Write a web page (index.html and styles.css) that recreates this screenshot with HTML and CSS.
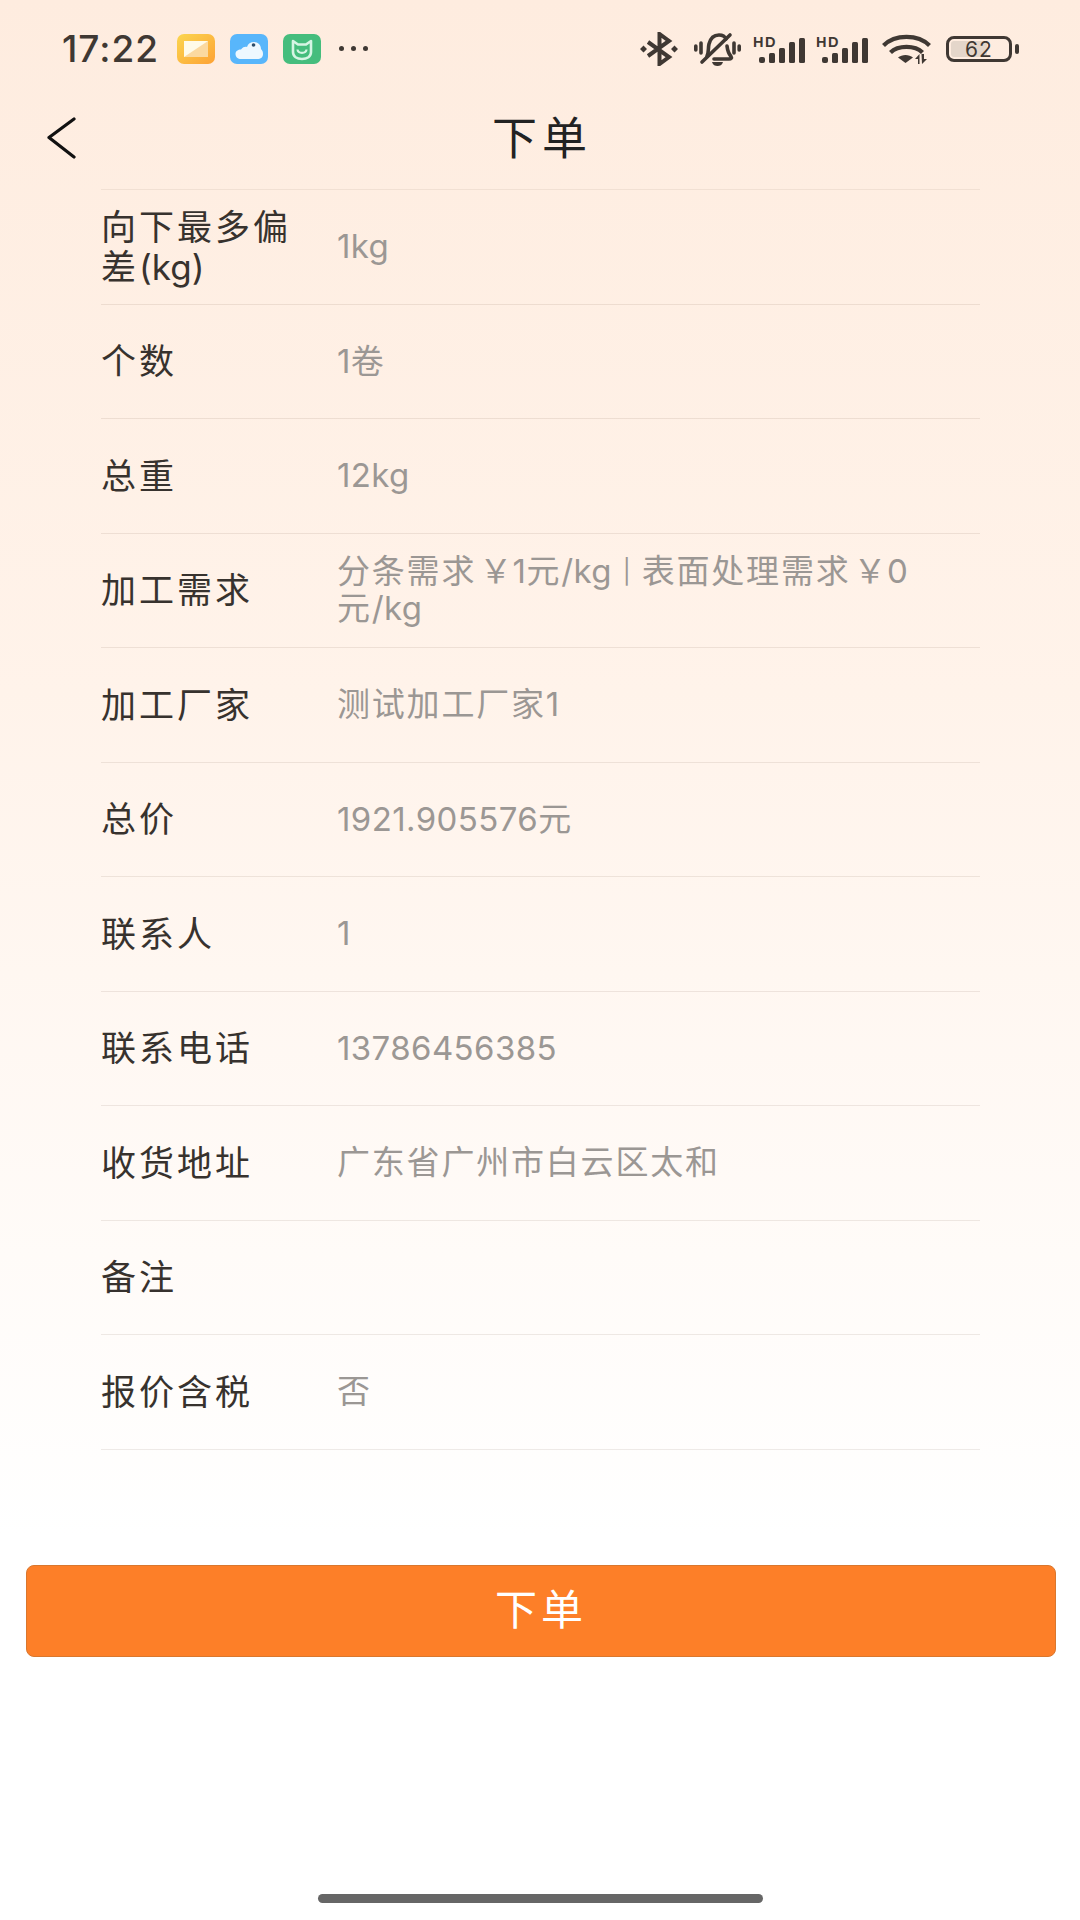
FILE: index.html
```html
<!DOCTYPE html>
<html lang="zh-CN">
<head>
    <meta charset="UTF-8">
    <meta name="viewport" content="width=device-width, initial-scale=1.0">
    <title>下单</title>
    <link rel="stylesheet" href="styles.css">
</head>
<body>
    <div class="page">
        <!-- Status Bar -->
        <div class="status-bar">
            <div class="status-left">
                <span class="time">17:22</span>
                <svg class="app-icon" viewBox="0 0 38 30">
                    <defs>
                        <linearGradient id="yellowBg" x1="0" y1="0" x2="1" y2="1">
                            <stop offset="0" stop-color="#fbd64f"/>
                            <stop offset="1" stop-color="#fda235"/>
                        </linearGradient>
                    </defs>
                    <rect width="38" height="30" rx="7" fill="url(#yellowBg)"/>
                    <path d="M7 7H31V23H7Z" fill="#fbd9a0"/>
                    <path d="M7 7H31L7 23Z" fill="#fffbe9"/>
                </svg>
                <svg class="app-icon" viewBox="0 0 38 30">
                    <rect width="38" height="30" rx="7" fill="#58b6fb"/>
                    <path d="M11 25C8 25 5.500 23 5.500 20C5.500 17 8 15.500 11 15.500C13 13 15 12.500 17 13C18 9.500 20.500 8 24 8C28 8 31 11 31 15C32.500 16.500 33 18 33 20C33 23 31 25 27 25Z" fill="#eef8ff"/>
                    <circle cx="23.500" cy="11" r="1.800" fill="#2d4d6b"/>
                </svg>
                <svg class="app-icon" viewBox="0 0 38 30">
                    <rect width="38" height="30" rx="7" fill="#45bd7d"/>
                    <path d="M10 7L15 10.500H23L28 7V18C28 22.500 24 25 19 25C14 25 10 22.500 10 18Z" fill="none" stroke="#d6f5e4" stroke-width="2.600" stroke-linejoin="round"/>
                    <path d="M14.500 15.500C15 20 23 20 23.500 15.500" fill="none" stroke="#d6f5e4" stroke-width="2.200"/>
                </svg>
                <div class="more-dots"><i></i><i></i><i></i></div>
            </div>
            <div class="status-right">
                <svg class="ico-bt" viewBox="0 0 38 34">
                    <path d="M8 10L29 25L19.500 32V2L29 9L8 24" fill="none" stroke="#3f3833" stroke-width="4"/>
                    <path d="M0 17L3.500 13.500L7 17L3.500 20.500ZM31 17L34.500 13.500L38 17L34.500 20.500Z" fill="#3f3833"/>
                </svg>
                <svg class="ico-bell" viewBox="0 0 47 34">
                    <g fill="none" stroke="#3f3833" stroke-width="3.600" stroke-linecap="round">
                        <path d="M1.800 14V18M7 11V21M40 11V21M45.200 14V18"/>
                        <path d="M13 24C15 20 14 16 15 12C16.500 6 20 3 25 3C28 3 31 4.500 32 7"/>
                        <path d="M33 14C33.500 18 34 21 37 24.500C38 26 37 27 35 27H20"/>
                        <path d="M8 30L36 3"/>
                    </g>
                    <path d="M18 30H29C28 33 26 34 23.500 34C21 34 19 33 18 30Z" fill="#3f3833"/>
                </svg>
                <svg class="ico-signal" viewBox="0 0 53 27">
                    <text x="0" y="11" class="hd-text">HD</text>
                    <rect x="6" y="21" width="6" height="6" rx="2" fill="#3f3833"/>
                    <rect x="16" y="17" width="6" height="10" rx="1.500" fill="#3f3833"/>
                    <rect x="26" y="12" width="6" height="15" rx="1.500" fill="#3f3833"/>
                    <rect x="36" y="6" width="6" height="21" rx="1.500" fill="#3f3833"/>
                    <rect x="46" y="2" width="6" height="25" rx="1.500" fill="#3f3833"/>
                </svg>
                <svg class="ico-signal" viewBox="0 0 53 27">
                    <text x="0" y="11" class="hd-text">HD</text>
                    <rect x="6" y="21" width="6" height="6" rx="2" fill="#3f3833"/>
                    <rect x="16" y="17" width="6" height="10" rx="1.500" fill="#3f3833"/>
                    <rect x="26" y="12" width="6" height="15" rx="1.500" fill="#3f3833"/>
                    <rect x="36" y="6" width="6" height="21" rx="1.500" fill="#3f3833"/>
                    <rect x="46" y="2" width="6" height="25" rx="1.500" fill="#3f3833"/>
                </svg>
                <svg class="ico-wifi" viewBox="0 0 49 30">
                    <g fill="none" stroke="#3f3833" stroke-width="4.200">
                        <path d="M1.500 11.500C13 0 36 0 47.500 11.500"/>
                        <path d="M8.500 18.500C16 11 33 11 40.500 18.500"/>
                    </g>
                    <path d="M16 23.500C20 20 27 20 31 23.500L23.500 29Z" fill="#3f3833"/>
                    <path d="M36 30V25H33L37.500 20V30ZM39.500 20H42V25H45L40 30Z" fill="#3f3833"/>
                </svg>
                <div class="battery">
                    <div class="battery-body">
                        <div class="battery-level"></div>
                        <span class="battery-text">62</span>
                    </div>
                    <div class="battery-nub"></div>
                </div>
            </div>
        </div>

        <!-- Header -->
        <div class="nav-bar">
            <svg class="back-icon" viewBox="0 0 30 42">
                <path d="M27 2L2 20.500L27 40" fill="none" stroke="#111" stroke-width="3.200" stroke-linecap="round" stroke-linejoin="round"/>
            </svg>
            <div class="nav-title">下单</div>
        </div>

        <!-- Order Rows -->
        <div class="order-list">
            <div class="order-row">
                <div class="row-label">向下最多偏差<span class="latin">(kg)</span></div>
                <div class="row-value">1kg</div>
            </div>
            <div class="order-row">
                <div class="row-label">个数</div>
                <div class="row-value">1<span class="cjk">卷</span></div>
            </div>
            <div class="order-row">
                <div class="row-label">总重</div>
                <div class="row-value">12kg</div>
            </div>
            <div class="order-row">
                <div class="row-label">加工需求</div>
                <div class="row-value"><span class="cjk">分条需求</span><span class="yen">￥</span>1<span class="cjk">元</span>/kg <span class="pipe">|</span> <span class="cjk">表面处理需求</span><span class="yen">￥</span>0<span class="cjk">元</span>/kg</div>
            </div>
            <div class="order-row">
                <div class="row-label">加工厂家</div>
                <div class="row-value"><span class="cjk">测试加工厂家</span>1</div>
            </div>
            <div class="order-row">
                <div class="row-label">总价</div>
                <div class="row-value">1921.905576<span class="cjk">元</span></div>
            </div>
            <div class="order-row">
                <div class="row-label">联系人</div>
                <div class="row-value">1</div>
            </div>
            <div class="order-row">
                <div class="row-label">联系电话</div>
                <div class="row-value">13786456385</div>
            </div>
            <div class="order-row">
                <div class="row-label">收货地址</div>
                <div class="row-value"><span class="cjk">广东省广州市白云区太和</span></div>
            </div>
            <div class="order-row">
                <div class="row-label">备注</div>
                <div class="row-value"></div>
            </div>
            <div class="order-row">
                <div class="row-label">报价含税</div>
                <div class="row-value"><span class="cjk">否</span></div>
            </div>
        </div>

        <div class="submit-wrap">
            <button class="submit-button">下单</button>
        </div>

        <div class="home-bar"></div>
    </div>
</body>
</html>
```

FILE: styles.css
```css
/* General Reset and Basic Styles */
* {
    margin: 0;
    padding: 0;
    box-sizing: border-box;
}

body {
    font-family: Inter, "Noto Sans CJK SC", sans-serif;
    background-color: #fff;
}

.page {
    width: 1080px;
    height: 1920px;
    display: flex;
    flex-direction: column;
    background: linear-gradient(180deg, #feecdf 0%, #fff3ea 36%, #ffffff 80%);
}

/* Status Bar */
.status-bar {
    height: 95px;
    padding: 32px 61px 0 62px;
    display: flex;
    justify-content: space-between;
    align-items: flex-start;
}

.status-left {
    display: flex;
    align-items: center;
    height: 33px;
}

.time {
    width: 115px;
    font-size: 37px;
    font-weight: 500;
    letter-spacing: 1px;
    color: #3f3833;
}

.app-icon {
    width: 38px;
    height: 30px;
    margin-right: 15px;
}

.more-dots {
    display: flex;
    gap: 7px;
    margin-left: 3px;
}

.more-dots i {
    width: 5px;
    height: 5px;
    border-radius: 50%;
    background-color: #3f3833;
}

.status-right {
    display: flex;
    align-items: center;
    height: 34px;
}

.ico-bt {
    width: 38px;
    height: 34px;
    margin-right: 16px;
}

.ico-bell {
    width: 47px;
    height: 34px;
    margin-right: 12px;
}

.ico-signal {
    width: 53px;
    height: 27px;
    margin-right: 10px;
    overflow: visible;
}

.hd-text {
    font-family: "Liberation Sans", sans-serif;
    font-size: 14.500px;
    font-weight: 700;
    letter-spacing: 1.500px;
    fill: #3f3833;
}

.ico-wifi {
    width: 49px;
    height: 30px;
    margin-left: 3px;
    margin-right: 15px;
}

.battery {
    display: flex;
    align-items: center;
}

.battery-body {
    position: relative;
    width: 66px;
    height: 26px;
    border: 3px solid #3f3833;
    border-radius: 8px;
    display: flex;
    justify-content: center;
    align-items: center;
    overflow: hidden;
}

.battery-level {
    position: absolute;
    top: 2px;
    left: 2px;
    bottom: 2px;
    width: 36px;
    border-radius: 3px;
    background-color: #e4d6ca;
}

.battery-text {
    position: relative;
    font-size: 21px;
    color: #3f3833;
    letter-spacing: 1px;
}

.battery-nub {
    width: 4px;
    height: 10px;
    margin-left: 3px;
    border-radius: 2px;
    background-color: #3f3833;
}

/* Header Section */
.nav-bar {
    position: relative;
    height: 94px;
    display: flex;
    justify-content: center;
    align-items: center;
}

.back-icon {
    position: absolute;
    left: 47px;
    top: 22px;
    width: 30px;
    height: 42px;
}

.nav-title {
    font-family: "Noto Sans CJK SC", sans-serif;
    font-size: 45px;
    letter-spacing: 5px;
    color: #222;
    margin-top: -14px;
    margin-left: 4px;
}

/* Order Rows */
.order-list {
    margin: 0 100px 0 101px;
    border-top: 1px solid rgba(90, 60, 40, 0.08);
}

.order-row {
    height: 114.500px;
    display: flex;
    align-items: center;
    border-bottom: 1px solid rgba(90, 60, 40, 0.1);
}

.row-label {
    width: 236px;
    flex-shrink: 0;
    padding-right: 38px;
    font-size: 35px;
    line-height: 40px;
    letter-spacing: 3px;
    color: #37322e;
}

.row-label .latin {
    letter-spacing: 0;
}

.row-value {
    width: 600px;
    font-size: 33px;
    line-height: 37px;
    letter-spacing: 0.400px;
    color: #9b9794;
}

.row-value .cjk {
    letter-spacing: 1.800px;
}

.row-value .yen {
    margin-left: 3px;
}

.row-value .pipe {
    margin: 0 1px;
    font-size: 24px;
    vertical-align: 3px;
}

/* Button */
.submit-wrap {
    margin-top: 115px;
    padding: 0 24px 0 26px;
}

.submit-button {
    width: 100%;
    height: 92px;
    padding-bottom: 8px;
    border: 1.500px solid #d9772e;
    border-radius: 8px;
    background-color: #fd7f28;
    font-family: "Noto Sans CJK SC", sans-serif;
    font-size: 42px;
    letter-spacing: 4px;
    color: #fff;
}

/* Home Indicator */
.home-bar {
    width: 445px;
    height: 9px;
    margin: auto auto 17px;
    border-radius: 5px;
    background-color: #666;
}
```
